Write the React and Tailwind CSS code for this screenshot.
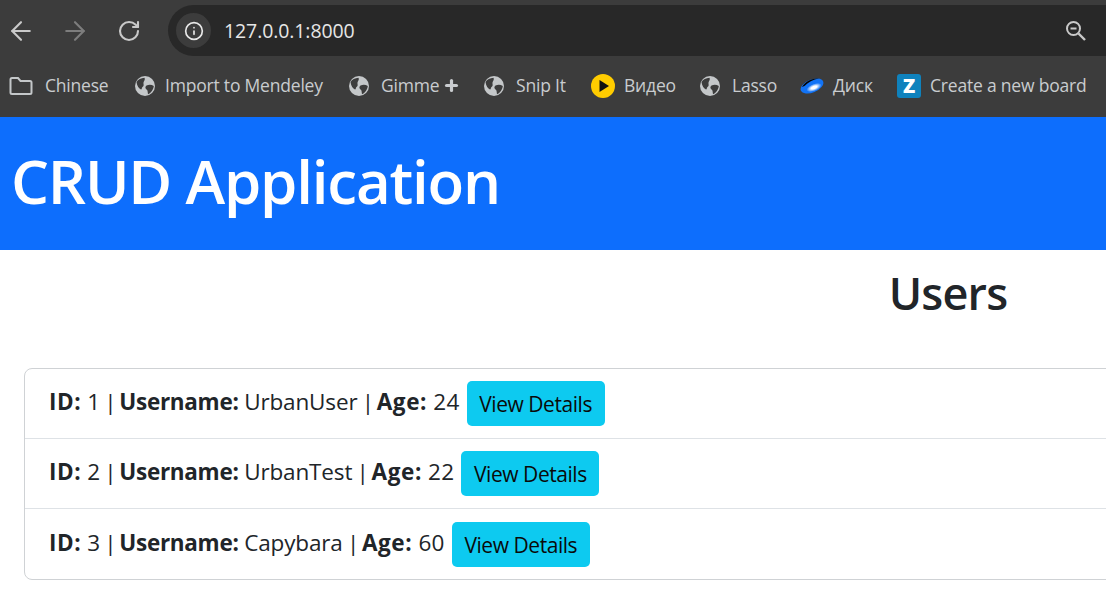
import React from 'react';
import { ArrowLeft, ArrowRight, RotateCw, Info, Plus } from 'lucide-react';

const font = "font-['Open_Sans','Noto_Sans',sans-serif]";

function Globe({ className = 'mr-px' }) {
    return (
        <svg width="20" height="20" viewBox="0 0 20 20" className={`shrink-0 ${className}`}>
            <circle cx="10" cy="10" r="10" fill="#c4c7c9" />
            <path d="M1.5 6 C3 3.5 6 2 9.5 1.8 C10.5 3.5 9 5 8.5 6.5 C8.3 8.5 9.5 9.5 7.5 11 C6.5 12 7 13.5 6 13.5 C4 12.5 2 10 1.5 6 Z" fill="#3c3c3c" />
            <path d="M11.5 9.5 C14 8.5 16.5 8.5 18.8 10 C18.5 13.5 16 17 13 18.2 C12.5 16 13 14.5 11.5 13.5 C10 12.5 10 10.5 11.5 9.5 Z" fill="#3c3c3c" />
        </svg>
    );
}

function Folder() {
    return (
        <svg width="24" height="20" viewBox="0 0 24 20" fill="none" stroke="#c4c7c9" strokeWidth="2" className="shrink-0 mr-[3px]">
            <path d="M1.5 3.5 Q1.5 2 3 2 H9 L11.5 5 H21 Q22.5 5 22.5 6.5 V16.5 Q22.5 18 21 18 H3 Q1.5 18 1.5 16.5 Z" />
        </svg>
    );
}

function VideoIcon() {
    return (
        <svg width="24" height="24" viewBox="0 0 24 24" className="shrink-0">
            <circle cx="12" cy="12" r="12" fill="#ffcc00" />
            <path d="M8.5 6 L18 12 L8.5 18 Z" fill="#111" />
        </svg>
    );
}

function DiskIcon() {
    return (
        <svg width="24" height="20" viewBox="0 0 24 20" className="shrink-0">
            <defs>
                <radialGradient id="diskGlow" cx="0.5" cy="0.5" r="0.5">
                    <stop offset="0.35" stopColor="#ffffff" />
                    <stop offset="1" stopColor="#ffffff" stopOpacity="0" />
                </radialGradient>
            </defs>
            <ellipse cx="12" cy="10" rx="12" ry="6.5" transform="rotate(-22 12 10)" fill="#1273f5" />
            <path d="M2 11 C5 6 11 2 19 2.5 C13 3.5 8 6.5 4.5 10 Z" fill="#050505" />
            <ellipse cx="14" cy="11.5" rx="8" ry="3.6" transform="rotate(-22 14 11.5)" fill="url(#diskGlow)" />
        </svg>
    );
}

function ZIcon() {
    return (
        <div className="w-6 h-6 shrink-0 rounded-[3px] bg-[#0f82bd] flex items-center justify-center text-white text-[20px] font-extrabold leading-none">Z</div>
    );
}

function ZoomIcon() {
    return (
        <svg width="24" height="24" viewBox="0 0 24 24" fill="none" stroke="#c9c9c9" strokeWidth="2">
            <circle cx="9.5" cy="9.5" r="6.5" />
            <path d="M6.5 9.5 H12.5" />
            <path d="M14.5 14.5 L21 21" strokeWidth="2.4" />
        </svg>
    );
}

function Bookmark({ icon, label, extra, className }) {
    return (
        <div className={`flex items-center gap-[9px] ${className}`}>
            {icon}
            <span className="text-[17.5px] text-[#c9cccf] whitespace-nowrap tracking-[-0.2px] -mt-[2px]">{label}</span>
            {extra}
        </div>
    );
}

function UserRow({ user, last }) {
    return (
        <li className={`h-[70px] pl-[24px] pb-[3px] flex items-center text-[#212529] text-[22.5px] tracking-[-0.15px] whitespace-pre ${last ? '' : 'border-b border-[#dee2e6]'}`}>
            <strong className="font-bold tracking-[0.6px]">ID:</strong>
            <span className="tracking-normal"> {user.id}</span>
            <span className="tracking-[-1.6px]"> | </span>
            <strong className="font-bold tracking-[-0.3px]">Username:</strong>
            <span> {user.username}</span>
            <span className="tracking-[-1.6px]"> | </span>
            <strong className="font-bold tracking-[0.6px]">Age:</strong>
            <span className="tracking-[0.3px]"> {user.age}</span>
            <button className="ml-[7px] mt-[3px] pt-[3px] h-[45px] w-[138px] rounded-[5px] bg-[#0dcaf0] text-[#0a0a0a] text-[21px] tracking-[-0.45px]">View Details</button>
        </li>
    );
}

const users = [
    { id: 1, username: 'UrbanUser', age: 24 },
    { id: 2, username: 'UrbanTest', age: 22 },
    { id: 3, username: 'Capybara', age: 60 },
];

export default function App() {
    return (
        <div className={`w-[1106px] h-[602px] overflow-hidden bg-white ${font}`}>
            {/* browser chrome */}
            <div className="h-[117px] bg-[#3c3c3c]">
                <div className="h-[61px] pt-[5px] flex">
                    <div className="w-[168px] h-[51px] flex items-center pl-[6px] shrink-0">
                        <ArrowLeft size={30} color="#c9c9c9" strokeWidth={1.7} />
                        <ArrowRight size={30} color="#7d7d7d" strokeWidth={1.7} className="ml-[24px]" />
                        <RotateCw size={24} color="#c9c9c9" strokeWidth={2.1} className="ml-[27px]" />
                    </div>
                    <div className="flex-1 h-[51px] bg-[#282828] rounded-l-full flex items-center pl-[8px] pr-[18px]">
                        <div className="w-[35px] h-[35px] rounded-full bg-[#3c3c3c] flex items-center justify-center">
                            <Info size={20} color="#e8e8e8" strokeWidth={2} />
                        </div>
                        <span className="ml-[13px] text-[19.5px] text-[#e6e6e6] tracking-[-0.1px]">127.0.0.1:8000</span>
                        <div className="ml-auto"><ZoomIcon /></div>
                    </div>
                </div>
                <div className="h-[50px] flex items-center pl-[9px]">
                    <Bookmark icon={<Folder />} label="Chinese" className="w-[126px]" />
                    <Bookmark icon={<Globe />} label="Import to Mendeley" className="w-[214px]" />
                    <Bookmark icon={<Globe className="mr-[3px]" />} label="Gimme" className="w-[135px]" extra={<Plus size={17} color="#c9cccf" strokeWidth={4.5} className="-ml-[5px] -mt-[2px]" />} />
                    <Bookmark icon={<Globe className="mr-[3px]" />} label="Snip It" className="w-[107px]" />
                    <Bookmark icon={<VideoIcon />} label="Видео" className="w-[109px]" />
                    <Bookmark icon={<Globe className="mr-[3px]" />} label="Lasso" className="w-[100px]" />
                    <Bookmark icon={<DiskIcon />} label="Диск" className="w-[97px]" />
                    <Bookmark icon={<ZIcon />} label="Create a new board" />
                </div>
            </div>

            {/* page */}
            <div className="h-[133px] bg-[#0d6efd] flex items-center pl-[11px] pb-[6px]">
                <h1 className="text-white text-[60px] font-semibold tracking-[-1.2px] leading-none whitespace-nowrap">CRUD Application</h1>
            </div>
            <div className="w-[1896px]">
                <h2 className="mt-[15px] h-[55px] text-center text-[#212529] text-[45px] font-semibold leading-[55px] tracking-[-0.8px]">Users</h2>
                <ul className="mt-[48px] ml-6 w-[1848px] border border-[#cfd2d5] rounded-[8px]">
                    {users.map((user, index) => (
                        <UserRow key={user.id} user={user} last={index === users.length - 1} />
                    ))}
                </ul>
            </div>
        </div>
    );
}
